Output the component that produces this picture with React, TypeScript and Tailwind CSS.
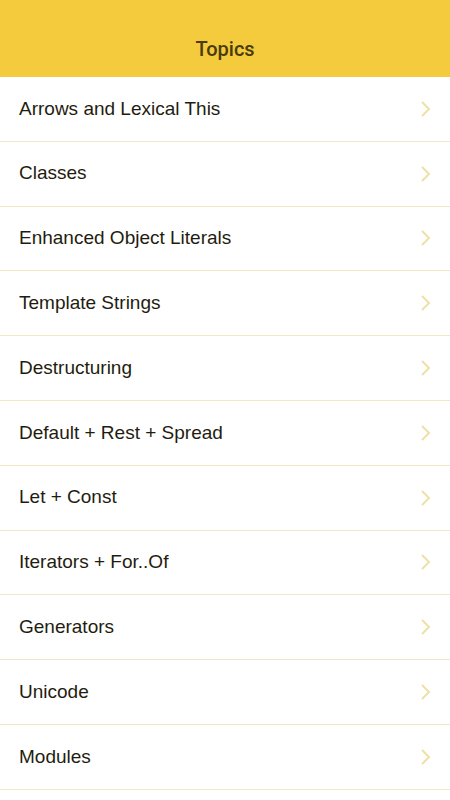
import React from "react";

const topics = [
  "Arrows and Lexical This",
  "Classes",
  "Enhanced Object Literals",
  "Template Strings",
  "Destructuring",
  "Default + Rest + Spread",
  "Let + Const",
  "Iterators + For..Of",
  "Generators",
  "Unicode",
  "Modules",
];

function Chevron() {
  return (
    <svg width="12" height="18" viewBox="0 0 12 18" fill="none">
      <path d="M3 2l7 7-7 7" stroke="#efe0a6" strokeWidth="2" />
    </svg>
  );
}

export default function App() {
  return (
    <div className="h-[800px] w-[450px] overflow-hidden bg-white font-['Liberation_Sans',Arial,sans-serif]">
      <header className="flex h-[77px] items-end justify-center bg-[#f4cb3c] pb-[13px]">
        <h1 className="font-['Roboto',sans-serif] text-[20px] font-medium text-[#4a3b0c]">Topics</h1>
      </header>
      <ul>
        {topics.map((t) => (
          <li
            key={t}
            className="flex h-[64.8px] items-center justify-between border-b-[1.5px] border-[#f3e8c4] pl-[19px] pr-[19px]"
          >
            <span className="text-[19px] text-[#1f1d10]">{t}</span>
            <Chevron />
          </li>
        ))}
      </ul>
    </div>
  );
}
